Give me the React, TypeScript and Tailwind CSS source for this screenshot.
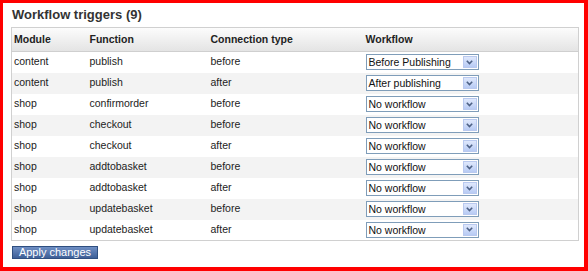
const triggers = [
  { module: 'content', fn: 'publish', type: 'before', workflow: 'Before Publishing' },
  { module: 'content', fn: 'publish', type: 'after', workflow: 'After publishing' },
  { module: 'shop', fn: 'confirmorder', type: 'before', workflow: 'No workflow' },
  { module: 'shop', fn: 'checkout', type: 'before', workflow: 'No workflow' },
  { module: 'shop', fn: 'checkout', type: 'after', workflow: 'No workflow' },
  { module: 'shop', fn: 'addtobasket', type: 'before', workflow: 'No workflow' },
  { module: 'shop', fn: 'addtobasket', type: 'after', workflow: 'No workflow' },
  { module: 'shop', fn: 'updatebasket', type: 'before', workflow: 'No workflow' },
  { module: 'shop', fn: 'updatebasket', type: 'after', workflow: 'No workflow' },
]

function FakeSelect({ value }: { value: string }) {
  return (
    <div className="flex h-[16px] w-[113px] items-center border border-[#7f9db9] bg-white">
      <span className="flex-1 pl-[2px] text-[10.5px] leading-none text-[#111]">{value}</span>
      <span className="mr-[1px] flex h-[12px] w-[14px] items-center justify-center border border-[#b9c9ef] bg-gradient-to-b from-[#dfe8fc] to-[#b8cbf4]">
        <svg width="7" height="5" viewBox="0 0 7 5">
          <path d="M0.8 0.8 L3.5 3.5 L6.2 0.8" fill="none" stroke="#4d6185" strokeWidth="1.6" />
        </svg>
      </span>
    </div>
  )
}

export default function App() {
  return (
    <div
      className="w-[588px] h-[271px] border-l-[3px] border-t-[3px] border-r-[4px] border-b-[4px] border-[#ff0000] bg-white pl-[8px] pr-[5px]"
      style={{ fontFamily: '"Liberation Sans", Arial, sans-serif' }}
    >
      {/* Title */}
      <div className="flex h-[24px] items-center pl-[1px] text-[13px] font-bold text-[#333]">
        Workflow triggers (9)
      </div>

      {/* Triggers table */}
      <table className="w-full table-fixed border-collapse border border-[#d0d0d0] text-[10.5px] text-[#222]">
        <colgroup>
          <col className="w-[76px]" />
          <col className="w-[121px]" />
          <col className="w-[155px]" />
          <col />
        </colgroup>
        <thead>
          <tr className="h-[24px] border-b border-[#cfcfcf] bg-gradient-to-b from-[#fcfcfc] to-[#e4e4e4]">
            <th className="pl-[2px] text-left font-bold">Module</th>
            <th className="pl-[2px] text-left font-bold">Function</th>
            <th className="pl-[2px] text-left font-bold">Connection type</th>
            <th className="pl-[2px] text-left font-bold">Workflow</th>
          </tr>
        </thead>
        <tbody>
          {triggers.map((t, i) => (
            <tr key={i} className={`h-[21px] ${i % 2 === 1 ? 'bg-[#f3f3f3]' : 'bg-white'}`}>
              <td className="pl-[2px]">{t.module}</td>
              <td className="pl-[2px]">{t.fn}</td>
              <td className="pl-[2px]">{t.type}</td>
              <td className="pl-[2px]">
                <FakeSelect value={t.workflow} />
              </td>
            </tr>
          ))}
        </tbody>
      </table>

      {/* Controls */}
      <div className="pt-[5px] pl-[1px]">
        <button className="flex h-[13px] w-[86px] items-center justify-center border border-[#2f4f80] bg-gradient-to-b from-[#6f8fc4] to-[#3e5f97] text-[11px] leading-none text-white">
          Apply changes
        </button>
      </div>
    </div>
  )
}
